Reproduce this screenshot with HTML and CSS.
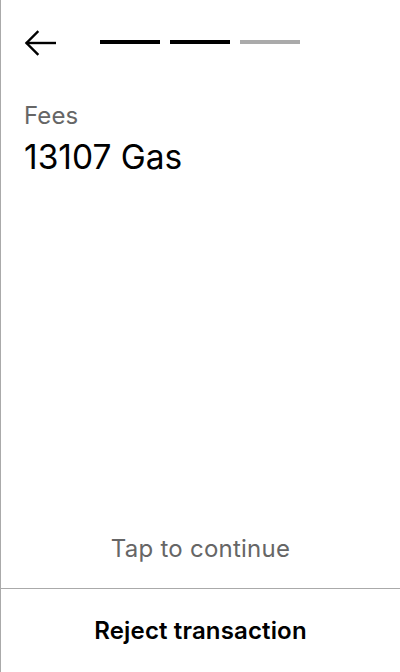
FILE: index.html
```html
<!DOCTYPE html>
<html>
<head>
<meta charset="utf-8">
<link rel="stylesheet" href="styles.css">
</head>
<body>
<div class="screen">
  <div class="header">
    <button class="back" aria-label="Back">
      <svg width="32" height="26" viewBox="0 0 32 26" fill="none" stroke="#000" stroke-width="2.4" stroke-linecap="square">
        <path d="M31 13H3"/>
        <path d="M13.5 2L2.5 13L13.5 24"/>
      </svg>
    </button>
    <div class="steps">
      <span class="step done"></span>
      <span class="step done"></span>
      <span class="step"></span>
    </div>
  </div>
  <div class="content">
    <div class="label">Fees</div>
    <div class="value">13107 Gas</div>
  </div>
  <div class="hint">Tap to continue</div>
  <div class="footer">
    <button class="reject">Reject transaction</button>
  </div>
</div>
</body>
</html>
```
FILE: styles.css
```css
html, body {
  margin: 0;
  padding: 0;
  background: #fff;
}
body {
  font-family: Inter, "Noto Sans", sans-serif;
  color: #000;
}
.screen {
  width: 400px;
  height: 672px;
  box-sizing: border-box;
  border-left: 1px solid #aaa;
  display: flex;
  flex-direction: column;
}
.header {
  display: flex;
  align-items: flex-start;
  padding: 30px 0 0 23px;
  height: 26px;
}
.back {
  border: 0;
  background: none;
  padding: 0;
  width: 32px;
  height: 26px;
  display: block;
}
.back svg { display: block; }
.steps {
  display: flex;
  gap: 10px;
  margin-left: 44px;
  margin-top: 10px;
}
.step {
  width: 60px;
  height: 4px;
  background: #aaa;
}
.step.done { background: #000; }
.content {
  padding: 0 0 0 23px;
  margin-top: 44px;
  flex: 1;
}
.label {
  font-size: 24px;
  line-height: 32px;
  color: #666;
  letter-spacing: 0.1px;
}
.value {
  font-size: 33.5px;
  line-height: 40px;
  margin-top: 5px;
}
.hint {
  text-align: center;
  font-size: 24px;
  line-height: 32px;
  color: #666;
  letter-spacing: 0.25px;
  padding-bottom: 23px;
}
.footer {
  border-top: 1px solid #aaa;
  height: 83px;
  display: flex;
}
.reject {
  flex: 1;
  border: 0;
  background: none;
  font-family: Inter, "Noto Sans", sans-serif;
  font-size: 24px;
  font-weight: 600;
  letter-spacing: 0.15px;
  color: #000;
  padding: 0;
}
```
